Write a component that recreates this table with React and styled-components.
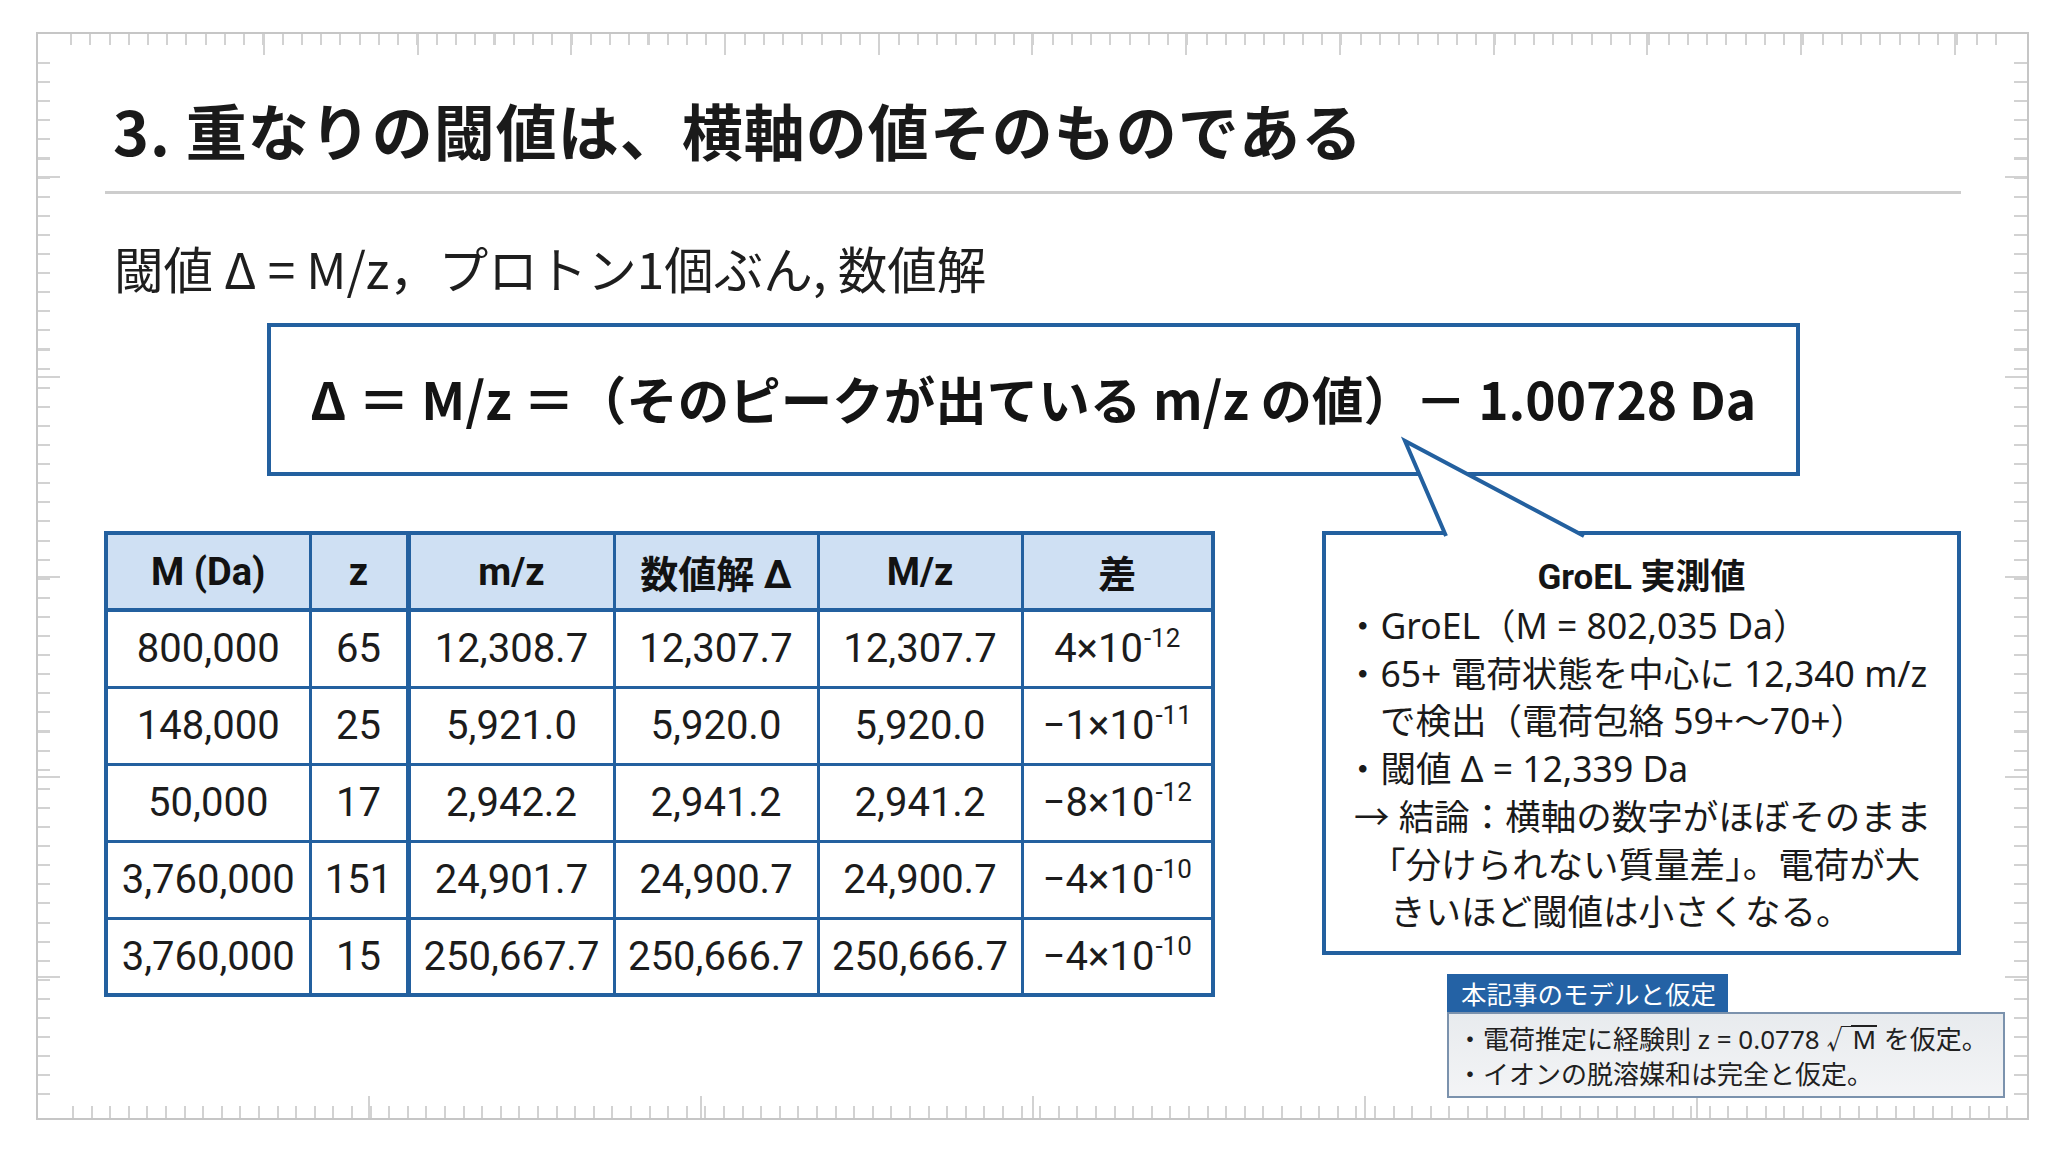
import React from "react";
import styled, { createGlobalStyle } from "styled-components";

const BLUE = "#23609f";
const TICK = "#d2d2d2";

const Global = createGlobalStyle`
  html, body { margin: 0; padding: 0; background: #ffffff; }
  body {
    font-family: "Noto Sans CJK JP", "Noto Sans", sans-serif;
    color: #1b1b1b;
  }
`;

const Page = styled.div`
  width: 2064px;
  height: 1152px;
  box-sizing: border-box;
  padding: 32px 0 0 36px;
  background: #ffffff;
  overflow: hidden;
`;

const rx = (sp) =>
  `repeating-linear-gradient(90deg, ${TICK} 0 2px, transparent 2px ${sp}px)`;
const ry = (sp) =>
  `repeating-linear-gradient(180deg, ${TICK} 0 2px, transparent 2px ${sp}px)`;

const Frame = styled.div`
  box-sizing: border-box;
  width: 1993px;
  height: 1088px;
  border: 2px solid #c6c6c6;
  padding: 61px 66px 0 67px;
  display: flex;
  flex-direction: column;
  background-image: ${rx(19.25)}, ${rx(153.7)}, ${ry(19.1)}, ${ry(200)},
    ${ry(19.1)}, ${ry(200)}, ${rx(18.6)}, ${rx(332)};
  background-repeat: no-repeat;
  background-position: 32px 0, 225px 0, 0 28px, 0 142px, right 0 top 28px,
    right 0 top 142px, left 34px bottom 0, left 330px bottom 0;
  background-size: 1927px 11px, 1740px 21px, 12px 1040px, 22px 900px,
    13px 1040px, 22px 900px, 1950px 12px, 1700px 22px;
`;

const Title = styled.h1`
  margin: 0;
  padding-left: 8px;
  font-size: 61px;
  line-height: 70px;
  letter-spacing: 1px;
  font-weight: 700;
  color: #1a1a1a;
  white-space: nowrap;
`;

const Divider = styled.div`
  height: 3px;
  background: #cdcdcd;
  margin-top: 26px;
`;

const Subtitle = styled.p`
  margin: 44px 0 0;
  padding-left: 9px;
  font-size: 49.5px;
  line-height: 60px;
  font-weight: 400;
  color: #1e1e1e;
  white-space: nowrap;
`;

const FormulaBox = styled.div`
  align-self: center;
  box-sizing: border-box;
  width: 1533px;
  height: 153px;
  margin-top: 25px;
  border: 4px solid ${BLUE};
  display: flex;
  align-items: center;
  justify-content: center;
  padding-bottom: 4px;
  font-size: 51.5px;
  font-weight: 700;
  color: #141414;
  white-space: nowrap;
`;

const MainRow = styled.div`
  display: flex;
  justify-content: space-between;
  align-items: flex-start;
  margin-top: 55px;
  margin-left: -1px;
`;

const Table = styled.table`
  border-collapse: collapse;
  table-layout: fixed;
  width: 1107px;
  border: 4px solid ${BLUE};
  font-family: Roboto, "Noto Sans CJK JP", sans-serif;
`;

const Row = styled.tr`
  height: 77px;
`;

const HeadCell = styled.th`
  background: #cfe0f3;
  padding: 0;
  font-size: 38px;
  font-weight: 700;
  color: #121212;
  text-align: center;
  border: 3px solid ${BLUE};
  border-bottom-width: 4px;
  white-space: nowrap;
  ${(p) => (p.$thick ? "border-right-width: 5px;" : "")}
`;

const Cell = styled.td`
  padding: 0;
  font-size: 40px;
  font-weight: 400;
  color: #1c1c1c;
  text-align: center;
  border: 3px solid ${BLUE};
  white-space: nowrap;
  ${(p) => (p.$thick ? "border-right-width: 5px;" : "")}
`;

const Sup = styled.sup`
  font-size: 26px;
  line-height: 0;
  vertical-align: 15px;
  margin-left: 1px;
`;

const RightCol = styled.div`
  display: flex;
  flex-direction: column;
  width: 639px;
`;

const Callout = styled.div`
  position: relative;
  box-sizing: border-box;
  width: 639px;
  height: 424px;
  border: 4px solid ${BLUE};
  background: #ffffff;
  padding: 19px 19px 0 19px;
  font-family: "Noto Sans", "Noto Sans CJK JP", sans-serif;
`;

const Tail = styled.svg`
  position: absolute;
  left: -4px;
  top: -98px;
  overflow: visible;
`;

const CalloutTitle = styled.div`
  text-align: center;
  font-family: Roboto, "Noto Sans CJK JP", sans-serif;
  font-size: 35px;
  line-height: 48px;
  font-weight: 700;
  color: #151515;
`;

const Line = styled.div`
  font-size: 35.5px;
  line-height: 47.7px;
  color: #1a1a1a;
  white-space: nowrap;
  padding-left: ${(p) => p.$indent || 0}px;
`;

const Note = styled.div`
  align-self: flex-end;
  width: 558px;
  margin-top: 19px;
  margin-right: -44px;
  display: flex;
  flex-direction: column;
  align-items: flex-start;
`;

const NoteLabel = styled.div`
  box-sizing: border-box;
  height: 38px;
  padding: 0 12px 0 14px;
  background: #2462a5;
  color: #ffffff;
  font-size: 25.5px;
  line-height: 38px;
  white-space: nowrap;
`;

const NoteBox = styled.div`
  box-sizing: border-box;
  width: 558px;
  height: 86px;
  border: 2px solid #7b92ad;
  background: linear-gradient(180deg, #e8ebee 0%, #f3f4f6 100%);
  padding: 8px 10px 0 8px;
  font-family: "Noto Sans", "Noto Sans CJK JP", sans-serif;
`;

const NoteLine = styled.div`
  font-size: 26px;
  line-height: 35px;
  color: #202020;
  white-space: nowrap;
`;

const Root = styled.span`
  white-space: nowrap;
`;

const Radicand = styled.span`
  display: inline-block;
  line-height: 0.98em;
  border-top: 2px solid #202020;
  margin-left: -1px;
  padding: 0 1px;
`;

const rows = [
  ["800,000", "65", "12,308.7", "12,307.7", "12,307.7", "4×10", "-12"],
  ["148,000", "25", "5,921.0", "5,920.0", "5,920.0", "−1×10", "-11"],
  ["50,000", "17", "2,942.2", "2,941.2", "2,941.2", "−8×10", "-12"],
  ["3,760,000", "151", "24,901.7", "24,900.7", "24,900.7", "−4×10", "-10"],
  ["3,760,000", "15", "250,667.7", "250,666.7", "250,666.7", "−4×10", "-10"],
];

const widths = [204, 98, 206, 204, 204, 191];

export default function App() {
  return (
    <>
      <Global />
      <Page>
        <Frame>
          <Title>3. 重なりの閾値は、横軸の値そのものである</Title>
          <Divider />
          <Subtitle>閾値 Δ = M/z，プロトン1個ぶん, 数値解</Subtitle>
          <FormulaBox>
            Δ ＝ M/z ＝（そのピークが出ている m/z の値）－ 1.00728 Da
          </FormulaBox>
          <MainRow>
            <Table>
              <colgroup>
                {widths.map((w, i) => (
                  <col key={i} style={{ width: w }} />
                ))}
              </colgroup>
              <thead>
                <Row>
                  <HeadCell>M (Da)</HeadCell>
                  <HeadCell $thick>z</HeadCell>
                  <HeadCell>m/z</HeadCell>
                  <HeadCell>数値解 Δ</HeadCell>
                  <HeadCell>M/z</HeadCell>
                  <HeadCell>差</HeadCell>
                </Row>
              </thead>
              <tbody>
                {rows.map((r, i) => (
                  <Row key={i}>
                    <Cell>{r[0]}</Cell>
                    <Cell $thick>{r[1]}</Cell>
                    <Cell>{r[2]}</Cell>
                    <Cell>{r[3]}</Cell>
                    <Cell>{r[4]}</Cell>
                    <Cell>
                      {r[5]}
                      <Sup>{r[6]}</Sup>
                    </Cell>
                  </Row>
                ))}
              </tbody>
            </Table>
            <RightCol>
              <Callout>
                <Tail width="300" height="104" viewBox="0 0 300 104">
                  <polygon points="83,4 124,100 262,100" fill="#ffffff" />
                  <polyline
                    points="124,99 83,4 262,99"
                    fill="none"
                    stroke={BLUE}
                    strokeWidth="4"
                    strokeLinejoin="miter"
                  />
                </Tail>
                <CalloutTitle>GroEL 実測値</CalloutTitle>
                <Line>・GroEL（M = 802,035 Da）</Line>
                <Line>・65+ 電荷状態を中心に 12,340 m/z</Line>
                <Line $indent={35}>で検出（電荷包絡 59+〜70+）</Line>
                <Line>・閾値 Δ = 12,339 Da</Line>
                <Line $indent={9}>→ 結論：横軸の数字がほぼそのまま</Line>
                <Line $indent={25}>「分けられない質量差」。電荷が大</Line>
                <Line $indent={45}>きいほど閾値は小さくなる。</Line>
              </Callout>
              <Note>
                <NoteLabel>本記事のモデルと仮定</NoteLabel>
                <NoteBox>
                  <NoteLine>
                    ・電荷推定に経験則 z = 0.0778{" "}
                    <Root>
                      √<Radicand>M</Radicand>
                    </Root>{" "}
                    を仮定。
                  </NoteLine>
                  <NoteLine>・イオンの脱溶媒和は完全と仮定。</NoteLine>
                </NoteBox>
              </Note>
            </RightCol>
          </MainRow>
        </Frame>
      </Page>
    </>
  );
}
